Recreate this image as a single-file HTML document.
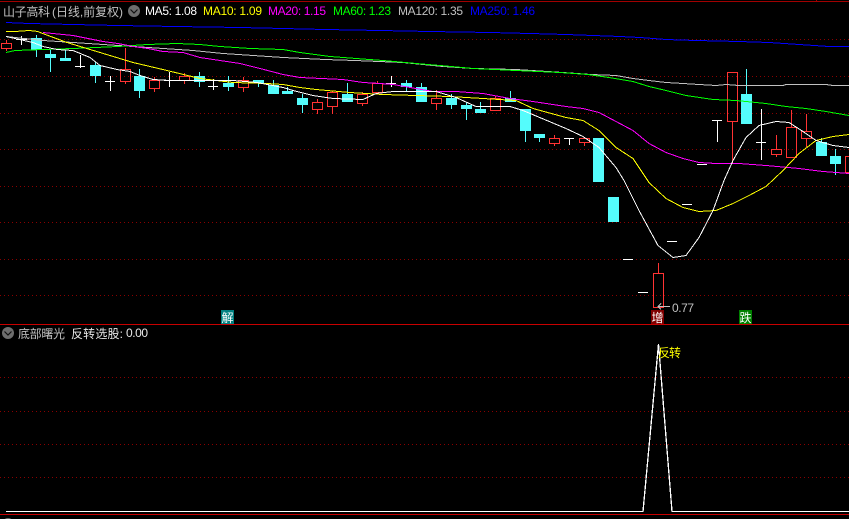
<!DOCTYPE html>
<html><head><meta charset="utf-8"><style>
html,body{margin:0;padding:0;background:#000;width:849px;height:519px;overflow:hidden}
svg{display:block}
text{font-family:"Liberation Sans","WenQuanYi Zen Hei","Noto Sans CJK SC",sans-serif;font-size:12px}
.g{position:absolute;left:0;width:849px;height:1px;background:repeating-linear-gradient(90deg,#8a0000 0,#8a0000 1px,#000 1px,#000 4px)}
</style></head><body>
<div class="g" style="top:39px"></div><div class="g" style="top:76px"></div><div class="g" style="top:113px"></div><div class="g" style="top:149px"></div><div class="g" style="top:186px"></div><div class="g" style="top:222px"></div><div class="g" style="top:259px"></div><div class="g" style="top:295px"></div><div class="g" style="top:377px"></div><div class="g" style="top:411px"></div><div class="g" style="top:444px"></div><div class="g" style="top:477px"></div>
<svg width="849" height="519" viewBox="0 0 849 519" xmlns="http://www.w3.org/2000/svg" style="position:absolute;left:0;top:0">
<g shape-rendering="crispEdges" fill="none">
<path d="M0 1.5H849" stroke="#a00000"/>
<path d="M816.5 0v1" stroke="#a00000"/>
<path stroke="#ff3333" d="M1.5 43.5h10v5h-10zM6.5 40v3M6.5 49v2M120.5 69.5h10v12h-10zM125.5 48v21M125.5 82v2M149.5 80.5h10v8h-10zM154.5 77v3M154.5 89v3M179.5 76.5h10v4h-10zM184.5 73v3M184.5 81v3M238.5 80.5h10v7h-10zM243.5 77v3M243.5 88v4M312.5 102.5h10v7h-10zM317.5 99v3M317.5 110v4M327.5 92.5h10v14h-10zM332.5 91v1M332.5 107v7M357.5 94.5h10v9h-10zM362.5 92v2M362.5 104v2M372.5 83.5h10v9h-10zM377.5 81v2M377.5 93v1M431.5 98.5h10v5h-10zM436.5 90v8M436.5 104v6M490.5 98.5h10v12h-10zM495.5 96v2M549.5 138.5h10v5h-10zM554.5 135v3M554.5 144v2M579.5 138.5h10v4h-10zM584.5 143v3M653.5 273.5h10v34h-10zM658.5 263v10M727.5 72.5h10v49h-10zM732.5 122v41M771.5 149.5h10v5h-10zM776.5 135v14M776.5 155v2M786.5 127.5h10v30h-10zM791.5 110v17M801.5 131.5h10v7h-10zM806.5 114v17M806.5 139v8M845.5 156.5h10v16h-10z"/>
<path stroke="#54fcfc" d="M36.5 35v22M50.5 50v22M65.5 50v8M95.5 62v21M139.5 69v29M199.5 72v15M228.5 76v15M258.5 80v7M273.5 80v5M287.5 87v4M302.5 94v19M347.5 83v11M406.5 80v11M421.5 83v4M451.5 94v15M466.5 102v18M480.5 102v7M510.5 91v7M525.5 131v11M539.5 138v4M746.5 69v25M821.5 138v4M835.5 149v26"/>
<path fill="#54fcfc" d="M31 38h11v12h-11zM45 54h11v4h-11zM60 58h11v3h-11zM90 65h11v11h-11zM134 76h11v15h-11zM194 76h11v6h-11zM223 83h11v4h-11zM253 80h11v3h-11zM268 85h11v9h-11zM282 91h11v3h-11zM297 98h11v7h-11zM342 94h11v8h-11zM401 83h11v4h-11zM416 87h11v15h-11zM446 98h11v7h-11zM461 105h11v4h-11zM475 109h11v4h-11zM505 98h11v4h-11zM520 109h11v22h-11zM534 134h11v4h-11zM593 138h11v44h-11zM608 197h11v25h-11zM741 94h11v30h-11zM816 142h11v14h-11zM830 156h11v8h-11z"/>
<path stroke="#fff" d="M80.5 55v13M75 66.5h10M110.5 76v15M105 81.5h10M169.5 72v15M164 80.5h10M213.5 79v11M208 86.5h10M391.5 76v11M386 83.5h10M569.5 138v7M564 138.5h10M623 259.5h10M638 292.5h10M667 241.5h10M682 204.5h10M697 164.5h10M712 120.5h10M717.5 120v22M761.5 109v51M756 142.5h10M21.5 36v9M16 39.5h11"/>
<g stroke-width="1">
<polyline stroke="#0000ff" points="6,22.5 29,23.5 73,24.5 118,25.5 176,26.5 240,27.5 283,28.5 325,29.5 380,30.5 430,31.5 490,32.5 530,33.5 566,34.5 620,36.5 640,37.5 666,39.5 696,40.5 739,41.5 769,42.5 799,44.5 829,46.5 849,46.5"/>
<polyline stroke="#c0c0c0" points="6,36.5 43,40.5 73,42.5 88,43.5 103,44.5 133,46.5 163,48.5 193,50.5 223,53.5 253,55.5 283,57.5 325,59.5 355,60.5 403,62.5 443,66.5 473,68.5 516,69.5 563,72.5 591,74.5 616,75.5 633,78.5 649,80.5 666,82.5 683,83.5 699,84.5 716,85.5 726,84.5 739,85.5 783,85.5 786,84.5 826,84.5 833,85.5 849,85.5"/>
<polyline stroke="#00ff00" points="6,52.5 15,50.5 73,48.5 118,46.5 147,44.5 177,43.5 200,44.5 220,46.5 250,48.5 283,49.5 300,52.5 330,56.5 356,58.5 383,60.5 416,63.5 440,65.5 473,68.5 516,70.5 560,72.5 588,74.5 609,77.5 633,81.5 649,86.5 666,90.5 686,95.5 713,99.5 736,100.5 746,101.5 766,103.5 786,106.5 806,108.5 826,111.5 849,115.5"/>
<polyline stroke="#ff00ff" points="43,32.5 53,33.5 73,35.5 88,38.5 103,41.5 118,43.5 133,46.5 148,48.5 163,51.5 183,52.5 200,57.5 220,60.5 240,63.5 260,68.5 283,74.5 300,77.5 343,79.5 363,82.5 380,83.5 393,84.5 416,88.5 433,91.5 456,91.5 483,93.5 510,98.5 533,101.5 566,106.5 583,108.5 599,112.5 616,121.5 633,130.5 649,143.5 666,152.5 683,158.5 699,162.5 716,163.5 739,163.5 766,165.5 799,168.5 823,171.5 849,173.5"/>
<polyline stroke="#ffff00" points="6,31.5 15,31.5 29,30.5 38,31.5 40,32.5 67,42.5 100,52.5 133,62.5 167,70.5 200,78.5 233,82.5 267,83.5 283,84.5 300,87.5 316,89.5 350,92.5 383,94.5 416,95.5 450,96.5 483,98.5 516,100.5 533,108.5 566,117.5 583,120.5 599,130.5 616,147.5 633,158.5 649,182.5 666,198.5 683,207.5 699,211.5 716,210.5 733,203.5 749,195.5 766,186.5 783,170.5 799,153.5 816,140.5 833,136.5 849,134.5"/>
<polyline stroke="#fff" points="6,36.5 33,42.5 43,46.5 57,49.5 73,50.5 90,57.5 100,65.5 117,69.5 130,71.5 140,75.5 153,79.5 170,80.5 233,80.5 257,82.5 283,87.5 293,90.5 313,95.5 333,98.5 363,99.5 376,93.5 393,91.5 436,91.5 456,97.5 476,106.5 510,106.5 523,110.5 566,128.5 583,136.5 599,147.5 616,167.5 624,180.5 639,210.5 658,245.5 673,257.5 686,255.5 699,237.5 713,210.5 724,180.5 733,160.5 746,137.5 759,125.5 776,121.5 789,122.5 803,131.5 816,140.5 833,145.5 849,147.5"/>
</g>
<polyline stroke="#fff" stroke-width="1.3" points="6,511.5 643,511.5 658.5,344 672,511.5 849,511.5"/>
<path d="M0 324.5H849" stroke="#c80000"/>
<path d="M0 514.5H849" stroke="#c80000" stroke-width="1.4"/>
<path d="M658 306.5h12" stroke="#c0c0c0"/>
<path d="M661 303.5l-3 3 3 3" stroke="#c0c0c0"/>
<rect x="221" y="310" width="13" height="14" fill="#008080"/>
<rect x="651" y="310" width="13" height="14" fill="#800000"/>
<rect x="739" y="310" width="13" height="14" fill="#008000"/>
</g>
<circle cx="134" cy="11" r="6" fill="#6e6e6e"/>
<path d="M130.5 9.5l3.5 3.5 3.5-3.5" fill="none" stroke="#111" stroke-width="1.2"/>
<circle cx="8" cy="333" r="6" fill="#6e6e6e"/>
<path d="M4.5 331.5l3.5 3.5 3.5-3.5" fill="none" stroke="#111" stroke-width="1.2"/>
<circle cx="8" cy="524" r="6" fill="#6e6e6e"/>
<text x="3" y="16" fill="#c0c0c0" textLength="47">山子高科</text>
<text x="52" y="16" fill="#c0c0c0" textLength="71">(日线,前复权)</text>
<text x="145" y="15" fill="#ffffff" textLength="52">MA5: 1.08</text>
<text x="203" y="15" fill="#ffff00" textLength="59">MA10: 1.09</text>
<text x="268" y="15" fill="#ff00ff" textLength="58">MA20: 1.15</text>
<text x="333" y="15" fill="#00ff00" textLength="58">MA60: 1.23</text>
<text x="398" y="15" fill="#c0c0c0" textLength="65">MA120: 1.35</text>
<text x="470" y="15" fill="#0000ff" textLength="65">MA250: 1.46</text>
<text x="18" y="338" fill="#c0c0c0" textLength="47">底部曙光</text>
<text x="71" y="338" fill="#e8e8e8" textLength="52">反转选股:</text>
<text x="126" y="337" fill="#e8e8e8" textLength="22">0.00</text>
<text x="658" y="357" fill="#ffff00" textLength="23">反转</text>
<text x="672" y="312" fill="#c0c0c0" textLength="22">0.77</text>
<text x="221.5" y="322" fill="#fff" textLength="12">解</text>
<text x="651.5" y="322" fill="#fff" textLength="12">增</text>
<text x="739.5" y="322" fill="#fff" textLength="12">跌</text>
<text x="18" y="528" fill="#fff" textLength="99">1.16/7 1.15/7 1.01</text>
</svg>
</body></html>
